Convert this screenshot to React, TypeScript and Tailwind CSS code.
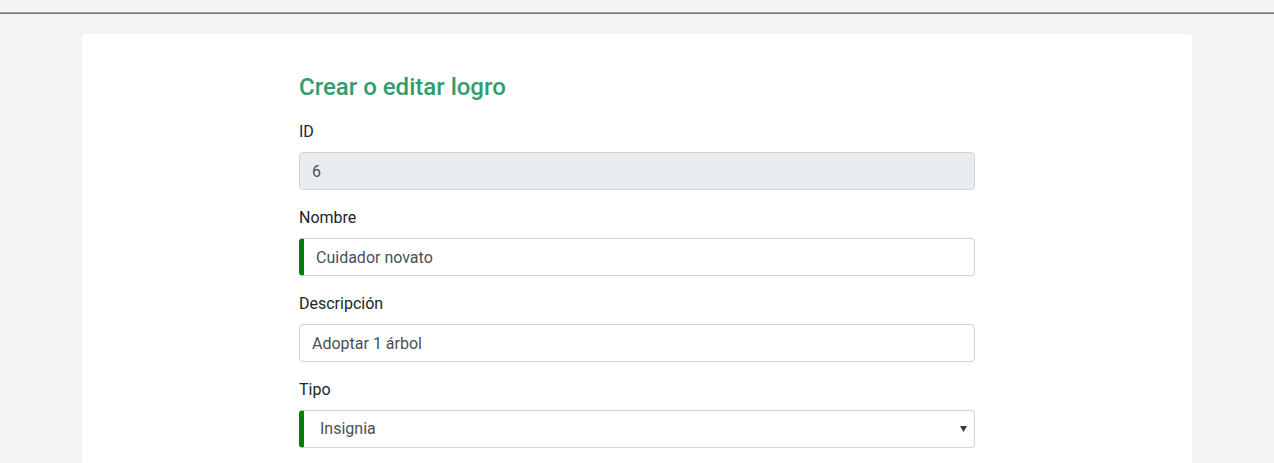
import React from "react";

const font = { fontFamily: "Roboto, 'Noto Sans', sans-serif" };

function Label({ children }: { children: React.ReactNode }) {
  return <label className="block mb-2 text-base leading-6 text-[#212529]">{children}</label>;
}

export default function App() {
  return (
    <div className="min-h-[463px] bg-[#f3f3f3]" style={font}>
      {/* top rule */}
      <div className="h-3" />
      <div className="h-px bg-[#9a9a9a]" />
      <div className="h-px bg-[#3d9a6a]" />

      <div className="pt-5 px-[82px]">
        <div className="bg-white rounded-[4px] pt-[38px] pb-10">
          <form className="w-[676px] mx-auto">
            <h4 className="text-2xl leading-[30px] font-medium text-[#2e9e6e] mb-[18px]">
              Crear o editar logro
            </h4>

            <div className="mb-4">
              <Label>ID</Label>
              <input
                disabled
                value="6"
                readOnly
                className="block w-full h-[38px] px-3 text-base text-[#495057] bg-[#e9ecef] border border-[#ced4da] rounded-[4px]"
              />
            </div>

            <div className="mb-4">
              <Label>Nombre</Label>
              <input
                defaultValue="Cuidador novato"
                className="block w-full h-[38px] pl-3 pr-3 text-base text-[#495057] bg-white border border-[#ced4da] border-l-[5px] border-l-[#008000] rounded-[4px]"
              />
            </div>

            <div className="mb-4">
              <Label>Descripción</Label>
              <input
                defaultValue="Adoptar 1 árbol"
                className="block w-full h-[38px] px-3 text-base text-[#495057] bg-white border border-[#ced4da] rounded-[4px]"
              />
            </div>

            <div className="mb-4">
              <Label>Tipo</Label>
              <div className="relative">
                <select
                  defaultValue="Insignia"
                  className="block w-full h-[38px] pl-4 pr-7 text-base text-[#495057] bg-white border border-[#ced4da] border-l-[5px] border-l-[#008000] rounded-[4px] appearance-none"
                >
                  <option>Insignia</option>
                  <option>Trofeo</option>
                </select>
                <svg
                  className="absolute right-[8px] top-[16px] pointer-events-none"
                  width="7"
                  height="6"
                  viewBox="0 0 7 6"
                >
                  <path d="M0 0h7L3.5 6z" fill="#343a40" />
                </svg>
              </div>
            </div>
          </form>
        </div>
      </div>
    </div>
  );
}
